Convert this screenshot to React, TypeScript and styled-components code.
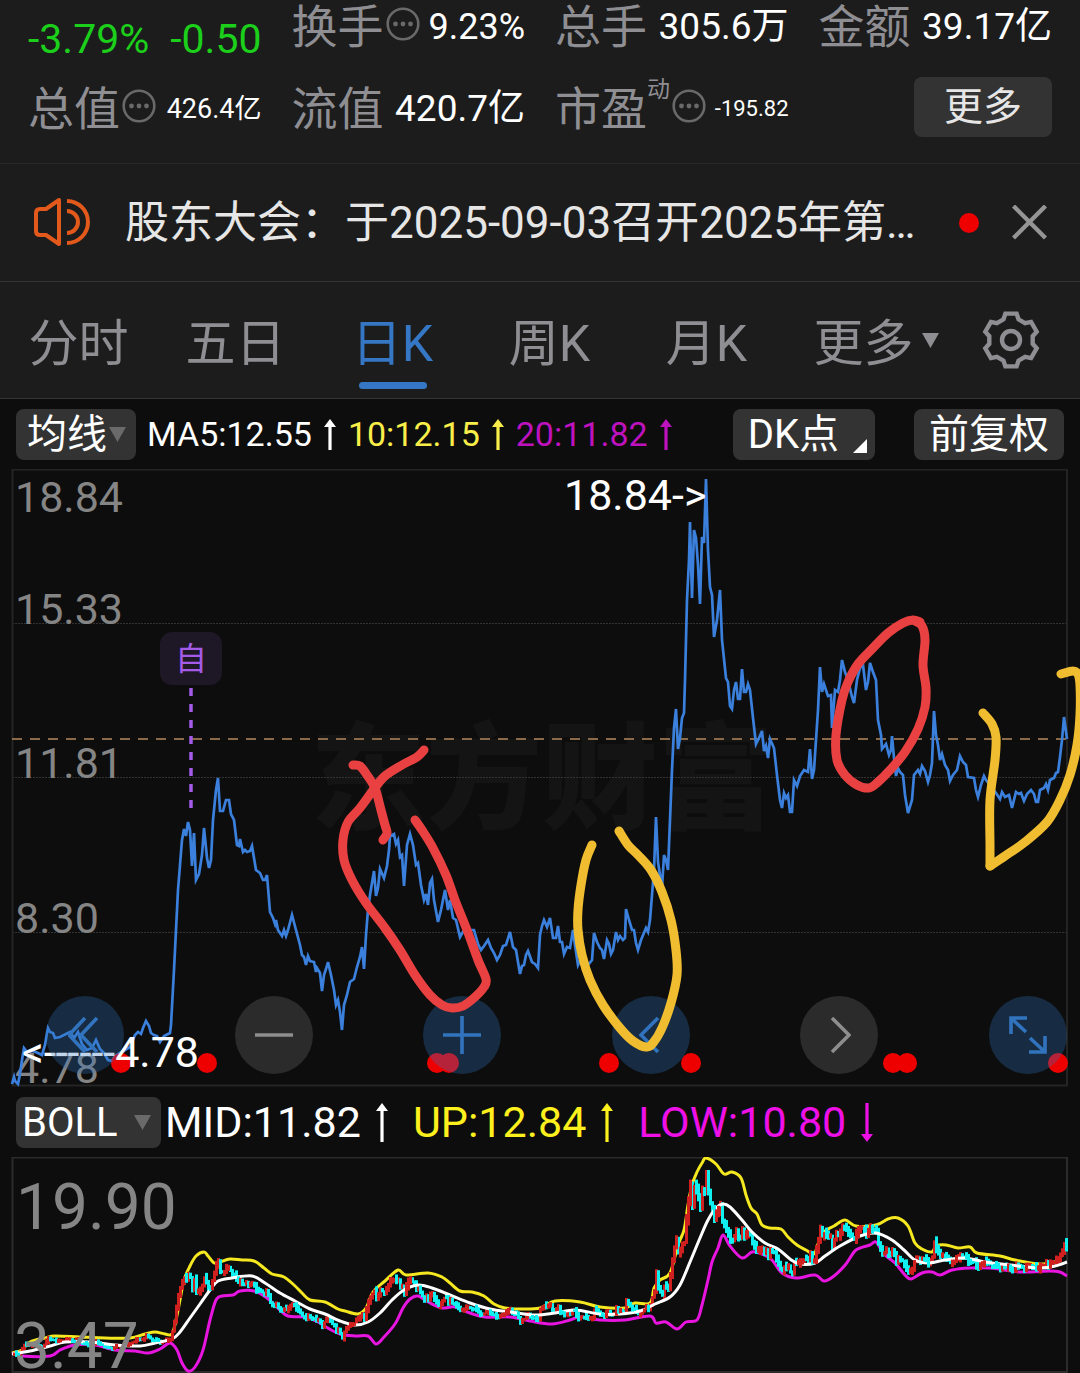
import React from "react";
import styled, { createGlobalStyle } from "styled-components";

const GlobalStyle = createGlobalStyle`
  * { box-sizing: border-box; }
  body {
    margin: 0;
    background: #0d0d0d;
    color: #fff;
    font-family: Roboto, "Noto Sans CJK SC", sans-serif;
  }
  button, select { font-family: inherit; }
  button { border: 0; padding: 0; background: none; cursor: pointer; }
`;

const Page = styled.main`
  overflow-x: hidden;
`;

/* ---------- quote header ---------- */

const Stats = styled.section`
  display: grid;
  grid-template-columns: repeat(4, 1fr);
  grid-template-rows: 50px 60px;
  column-gap: 30px;
  row-gap: 27px;
  padding: 0 28px 26px;
  background: #1c1c1c;
  border-bottom: 1px solid #282828;
`;

const Change = styled.div`
  display: flex;
  justify-content: space-between;
  padding-top: 14px;
  font-size: 41px;
  line-height: 50px;
  color: #1bcf1b;
`;

const Stat = styled.div`
  display: flex;
  align-items: center;
  justify-content: space-between;
  padding-top: 4px;
  white-space: nowrap;
`;

const StatLabel = styled.span`
  display: flex;
  align-items: center;
  gap: 2px;
  font-size: 46px;
  line-height: 50px;
  color: #8e8e93;
`;

const Sup = styled.small`
  align-self: flex-start;
  margin-left: -2px;
  font-size: 23px;
  line-height: 12px;
`;

const StatValue = styled.span<{ $size: number }>`
  font-size: ${(p) => p.$size}px;
  line-height: 50px;
`;

const InfoIcon = styled.svg`
  margin-bottom: 6px;
`;

const MoreButton = styled.button`
  justify-self: end;
  width: 138px;
  border-radius: 8px;
  background: #333;
  color: #e6e6e6;
  font-size: 39px;
  line-height: 60px;
`;

/* ---------- notice ---------- */

const Notice = styled.section`
  display: flex;
  align-items: center;
  height: 118px;
  padding: 0 33px 0 31px;
  background: #1c1c1c;
  border-bottom: 1px solid #333;
`;

const NoticeLink = styled.a`
  flex: 1;
  margin-left: 34px;
  color: #e6e6e6;
  font-size: 44px;
  line-height: 60px;
  text-decoration: none;
  white-space: nowrap;
`;

const Unread = styled.span`
  width: 20px;
  height: 20px;
  margin-right: 33px;
  border-radius: 50%;
  background: #ee0000;
`;

const IconButton = styled.button`
  display: flex;
  align-items: center;
  justify-content: center;
`;

/* ---------- period tabs ---------- */

const TabBar = styled.nav`
  display: flex;
  height: 117px;
  background: #1c1c1c;
  border-bottom: 1px solid #363636;
`;

const TabList = styled.div`
  display: grid;
  grid-template-columns: repeat(6, 1fr);
  flex: 942;
`;

const SettingsButton = styled(IconButton)`
  flex: 138;
`;

const Tab = styled.button<{ $active?: boolean }>`
  position: relative;
  padding-top: 8px;
  color: ${(p) => (p.$active ? "#3577c4" : "#8e8e93")};
  font-size: 50px;
  line-height: 108px;

  &::after {
    content: "";
    display: ${(p) => (p.$active ? "block" : "none")};
    position: absolute;
    left: calc(50% - 34px);
    bottom: 9px;
    width: 68px;
    height: 7px;
    border-radius: 4px;
    background: #3577c4;
  }
`;

const TabCaret = styled.svg`
  position: absolute;
  left: calc(50% + 58px);
  top: 51px;
`;

/* ---------- indicator bars ---------- */

const Bar = styled.div<{ $gap: number }>`
  display: flex;
  align-items: center;
  gap: ${(p) => p.$gap}px;
  height: 70px;
  padding: 0 16px;
`;

const Picker = styled.label<{ $width: number }>`
  position: relative;
  display: block;
  width: ${(p) => p.$width}px;
`;

const PickerSelect = styled.select<{ $indent: number }>`
  appearance: none;
  display: block;
  width: 100%;
  height: 51px;
  padding: 0 0 0 ${(p) => p.$indent}px;
  border: 0;
  border-radius: 8px;
  background: #333;
  color: #fff;
  font-size: 40px;
  line-height: 51px;
`;

const PickerCaret = styled.svg`
  position: absolute;
  right: 10px;
  top: 18px;
  pointer-events: none;
`;

const Readings = styled.div<{ $gap: number }>`
  display: flex;
  gap: ${(p) => p.$gap}px;
`;

const Reading = styled.span<{ $color: string; $size: number; $gap: number }>`
  display: flex;
  align-items: center;
  gap: ${(p) => p.$gap}px;
  color: ${(p) => p.$color};
  font-size: ${(p) => p.$size}px;
  line-height: 50px;
  white-space: nowrap;
`;

const Actions = styled.div`
  display: flex;
  gap: 39px;
  margin-left: auto;
`;

const ToolButton = styled.button`
  display: flex;
  gap: 14px;
  height: 51px;
  padding: 0 15px;
  border-radius: 8px;
  background: #333;
  color: #fff;
  font-size: 40px;
  line-height: 51px;
`;

const Corner = styled.svg`
  align-self: flex-end;
  margin: 0 -7px 7px 0;
`;

/* ---------- charts ---------- */

const Plot = styled.div`
  position: relative;
`;

const Drawing = styled.svg`
  display: block;
  width: 100%;
  height: auto;
  font-family: Roboto, "Noto Sans CJK SC", sans-serif;
`;

const InkLayer = styled(Drawing)`
  position: absolute;
  inset: 0;
  pointer-events: none;
`;

const Controls = styled.div`
  position: absolute;
  left: 0;
  right: 0;
  bottom: 13px;
  display: flex;
  justify-content: space-between;
  padding: 0 13px 0 46px;
`;

const RoundButton = styled(IconButton)<{ $muted?: boolean }>`
  width: 78px;
  height: 78px;
  border-radius: 50%;
  background: ${(p) => (p.$muted ? "#2b2b2b" : "rgba(46, 116, 188, 0.3)")};
  color: ${(p) => (p.$muted ? "#8e8e8e" : "#3273be")};
`;

/* ---------- data ---------- */

type Point = [number, number];

const parse = (s: string): Point[] =>
  s.trim().split(/\s+/).map((p) => p.split(",").map(Number) as Point);

const PRICE = parse(`
12,1084 14,1077 15,1081 18,1084 20,1074 22,1060 24,1048 27,1052 33,1051 38,1053 42,1055 45,1045 47,1033 48,1028
50,1032 53,1033 55,1038 60,1037 66,1034 70,1032 74,1038 78,1032 82,1044 87,1050 92,1048 96,1040 100,1049 104,1053 108,1060
112,1061 115,1056 120,1053 125,1050 130,1047 135,1035 138,1032 141,1034 143,1028 146,1021 149,1026 151,1033 154,1035
157,1036 160,1042 164,1036 170,1033 171,1025 174,970 176,930 178,890 180,865 182,840 184,829 186,836 188,822 190,830
192,866 194,833 196,880 199,874 202,855 204,828 207,858 209,868 211,860 213,820 216,790 218,778 220,811 223,811
226,800 229,800 231,814 234,820 237,845 239,846 240,839 243,852 245,850 247,852 250,851 252,846 256,870 260,873
263,880 265,880 267,875 270,912 273,918 275,924 276,920 278,930 282,936 284,930 286,936 288,930 292,915 296,930
300,945 302,955 304,957 306,965 308,956 310,961 314,962 316,972 317,968 320,973 322,991 324,975 326,969 328,962
331,975 334,990 336,1005 338,1000 340,1012 342,1030 344,1005 347,995 350,982 354,979 357,967 360,957 362,947 364,969
366,935 368,910 370,895 374,871 376,896 378,888 380,869 384,878 387,866 389,850 390,836 394,834 396,844 398,840
400,857 402,855 404,886 407,845 410,834 413,845 416,865 418,863 421,885 424,900 426,894 428,905 430,883 432,879
434,900 438,922 441,910 445,890 448,910 450,900 453,918 456,920 460,937 464,930 474,930 478,944 481,950 484,946
488,940 491,948 494,953 497,960 500,955 503,946 506,945 510,932 513,947 516,950 520,974 522,966 524,965 526,955
528,951 532,962 535,964 538,968 540,935 542,926 544,920 547,927 550,918 553,938 556,938 558,926 560,942 562,942
564,954 567,947 570,948 573,930 575,945 578,965 583,955 588,965 592,960 594,933 597,942 600,948 602,950 604,959
607,940 609,944 611,954 613,950 616,932 618,940 620,936 623,940 625,938 626,909 629,920 632,930 634,930 636,943
638,950 641,940 646,928 648,932 650,920 652,895 654,870 656,817 658,862 662,888 664,855 666,860 668,870 670,820
672,770 674,728 676,709 678,749 680,738 682,718 684,713 685,680 687,600 689,560 690,522 692,598 694,530 696,538
698,565 700,604 702,537 704,543 706,479 708,550 710,587 712,595 714,637 717,620 720,590 722,640 726,678 728,682
730,706 732,709 734,690 736,682 738,699 740,699 742,669 744,692 746,692 748,684 750,690 753,718 756,744 759,738
762,731 764,751 766,746 768,758 770,739 774,748 777,775 780,800 782,808 784,793 786,798 788,795 790,812 792,812
794,780 797,786 800,776 804,770 808,772 810,749 812,779 814,770 816,740 818,710 820,667 822,692 824,684 828,696
831,695 832,728 835,690 838,692 840,680 842,660 845,672 848,680 852,697 854,703 857,680 860,668 863,665 866,690
868,682 870,663 873,672 876,680 878,720 881,735 882,749 886,744 889,755 891,750 892,736 894,758 896,776 898,768
900,772 903,775 905,795 908,813 912,800 914,775 918,770 920,774 922,766 925,771 928,782 930,775 932,763 934,711
936,735 938,745 940,760 942,754 945,765 948,770 950,781 953,775 957,770 960,756 963,762 966,765 968,777 974,778
976,790 978,797 981,785 984,776 986,780 990,785 996,793 1000,799 1002,792 1005,797 1009,795 1012,808 1016,792
1019,794 1021,793 1024,801 1027,794 1031,790 1034,794 1036,802 1038,802 1040,790 1044,788 1046,784 1048,790
1050,780 1054,778 1056,773 1058,772 1060,757 1062,740 1064,717 1067,739`);

const UPPER = parse(`
12,1353 22,1350 30,1342 45,1338 55,1336 80,1337 105,1338 130,1338 145,1334 155,1332 165,1334 172,1334 176,1320
180,1300 184,1280 190,1266 196,1256 204,1252 208,1256 214,1263 220,1262 230,1259 242,1260 254,1261 264,1268 272,1274
284,1277 294,1285 302,1293 310,1300 325,1302 338,1309 345,1311 358,1314 366,1308 373,1292 385,1281 398,1270 406,1275
428,1273 442,1277 450,1283 460,1291 472,1292 484,1296 494,1304 505,1308 520,1309 540,1308 555,1301 580,1302 600,1307
625,1308 635,1303 650,1303 654,1288 660,1280 670,1273 678,1245 684,1230 688,1205 692,1185 697,1172 702,1163 706,1158
716,1164 724,1174 732,1172 741,1178 746,1195 751,1208 757,1214 762,1225 770,1228 781,1229 788,1237 797,1245 806,1250
814,1254 818,1244 824,1232 834,1226 845,1220 856,1226 876,1225 888,1219 898,1218 908,1226 915,1243 922,1249 932,1252
936,1246 946,1245 958,1248 970,1247 977,1253 1000,1256 1015,1260 1040,1264 1055,1262 1062,1255 1067,1246`);

const MIDDLE = parse(`
12,1354 30,1351 50,1346 65,1342 90,1342 115,1345 140,1346 155,1343 172,1339 180,1332 190,1318 200,1304 210,1290
218,1281 232,1278 252,1276 265,1283 280,1293 295,1301 310,1309 325,1314 340,1321 355,1325 368,1322 380,1313 392,1300
404,1290 418,1285 432,1288 450,1295 470,1303 490,1309 510,1312 535,1315 555,1313 575,1310 600,1314 620,1314 640,1311
655,1304 670,1297 680,1285 690,1262 700,1238 708,1220 716,1208 723,1204 730,1207 742,1220 752,1232 765,1243 778,1249
790,1259 800,1264 815,1263 825,1256 840,1246 860,1236 876,1233 892,1240 904,1250 915,1260 928,1263 945,1260 965,1258
985,1262 1010,1265 1040,1268 1055,1266 1067,1262`);

const LOWER = parse(`
12,1353 22,1356 50,1356 60,1350 75,1345 95,1345 115,1350 135,1351 148,1353 160,1349 170,1343 177,1350 182,1363
188,1371 195,1367 203,1350 210,1320 216,1300 222,1296 233,1295 240,1291 254,1291 267,1298 278,1308 288,1316 305,1317
318,1322 326,1327 340,1334 355,1336 368,1336 376,1344 384,1337 395,1324 403,1308 410,1299 418,1296 430,1303 442,1308
455,1307 470,1313 485,1317 510,1317 530,1321 552,1324 570,1320 580,1317 600,1320 625,1320 650,1316 656,1323 666,1322
677,1329 686,1322 697,1320 702,1305 708,1280 712,1262 718,1248 723,1235 730,1246 742,1258 752,1252 762,1254 772,1260
782,1273 796,1278 815,1275 824,1281 834,1276 846,1264 856,1250 870,1245 876,1242 884,1254 895,1263 905,1275 911,1279
922,1273 932,1272 940,1275 952,1270 970,1268 990,1268 1020,1272 1050,1271 1060,1272 1067,1276`);

const EVENTS = [121, 207, 437, 449, 609, 691, 893, 907, 1058];

const line = (pts: Point[]) => "M" + pts.map((p) => p.join(" ")).join("L");

/* Catmull-Rom smoothing for the bands and hand-drawn strokes */
const smooth = (pts: Point[]) => {
  let d = `M${pts[0]}`;
  for (let i = 0; i < pts.length - 1; i++) {
    const a = pts[Math.max(i - 1, 0)];
    const b = pts[i];
    const c = pts[i + 1];
    const e = pts[Math.min(i + 2, pts.length - 1)];
    d += `C${b[0] + (c[0] - a[0]) / 6} ${b[1] + (c[1] - a[1]) / 6} ${c[0] - (e[0] - b[0]) / 6} ${c[1] - (e[1] - b[1]) / 6} ${c[0]} ${c[1]}`;
  }
  return d;
};

const RED_INK = [
  "424,750 417,757 402,765 385,776 374,789 360,808 348,822 343,840 344,860 352,880 366,903 385,928 400,950 415,975 430,995 442,1005 452,1008 463,1006 475,997 484,987 486,979 478,960 467,930 455,900 446,875 433,848 422,830 415,820",
  "353,765 360,766 367,775 375,788 381,810 385,825 387,833 383,840",
  "920,622 913,620 903,623 888,633 872,649 858,664 848,682 842,700 836,735 837,760 845,775 857,785 869,788 878,782 890,770 905,752 918,729 925,707 926,688 923,665 925,640 922,626 913,620",
].map((s) => smooth(parse(s)));

const YELLOW_INK = [
  "592,845 586,860 581,885 578,910 578,930 582,955 590,980 603,1005 620,1028 633,1041 646,1047 653,1043 662,1028 671,1003 677,975 676,950 671,920 662,892 651,870 638,855 628,845 619,831",
  "983,713 992,724 996,737 995,760 990,800 990,845 990,866",
  "990,866 1005,856 1025,842 1047,822 1060,800 1070,775 1077,745 1080,715 1080,685 1078,674 1073,671 1061,674",
].map((s) => smooth(parse(s)));

const priceAt = (x: number) => {
  const i = Math.max(1, PRICE.findIndex((p) => p[0] >= x));
  const [x0, y0] = PRICE[i - 1];
  const [x1, y1] = PRICE[i];
  return 1171 + (y0 + ((y1 - y0) * (x - x0)) / (x1 - x0) - 479) * 0.3047;
};

/* wicks grow with the price level */
const CANDLES = Array.from({ length: 527 }, (_, i) => {
  const x = 14 + i * 2;
  const open = priceAt(x - 2);
  const close = priceAt(x);
  const flicker = (i * 7919) % 5;
  const scale = 1 + Math.max(0, 1355 - close) / 100;
  const top = Math.max(1170, Math.min(open, close) - (0.6 + flicker * 0.5) * scale);
  const bottom = Math.max(open, close) + (0.6 + ((i * 31) % 4) * 0.5) * scale;
  return { x, top, height: bottom - top, up: close === open ? flicker > 2 : close < open };
});

/* ---------- small drawings ---------- */

const Dots = () => (
  <InfoIcon width="34" height="34" viewBox="0 0 34 34" aria-hidden="true">
    <circle cx="17" cy="17" r="15.300" fill="none" stroke="#69696b" strokeWidth="2.600" />
    <g fill="#69696b">
      <circle cx="9.500" cy="17" r="2.400" />
      <circle cx="17" cy="17" r="2.400" />
      <circle cx="24.500" cy="17" r="2.400" />
    </g>
  </InfoIcon>
);

const Arrow = ({ down, height }: { down?: boolean; height: number }) => (
  <svg width="12" height={height} viewBox={`0 0 12 ${height}`} aria-hidden="true">
    <g fill="currentColor" transform={down ? `rotate(180 6 ${height / 2})` : undefined}>
      <path d="M6 0L12 8H0Z" />
      <rect x="4.400" y="5" width="3.200" height={height - 5} />
    </g>
  </svg>
);

const Caret = () => (
  <PickerCaret width="17" height="15" viewBox="0 0 17 15" aria-hidden="true">
    <path d="M0 0H17L8.500 15Z" fill="#6a6a6a" />
  </PickerCaret>
);

const GEAR = (() => {
  const tooth: Point[] = [[-20, 22], [-12, 27], [12, 27], [20, 22]];
  const pts: string[] = [];
  for (let k = 0; k < 6; k++) {
    tooth.forEach(([angle, r]) => {
      const t = ((k * 60 - 90 + angle) * Math.PI) / 180;
      pts.push(`${(30 + r * Math.cos(t)).toFixed(1)} ${(30 + r * Math.sin(t)).toFixed(1)}`);
    });
  }
  return `M${pts.join("L")}Z`;
})();

const PriceChart = () => (
  <Drawing viewBox="0 469 1080 618" role="img" aria-label="日K">
    <text x="310" y="820" fontSize="116" fontWeight="900" fill="#141414">东方财富</text>
    <g stroke="#333" strokeWidth="1" strokeDasharray="2 1">
      <path d="M12 623.500H1067M12 777.500H1067M12 932.500H1067" />
    </g>
    <path d="M12.500 469.500H1067V1085.500H12.500Z" fill="none" stroke="#242424" strokeWidth="2" />
    <path d="M12 739H1067" stroke="#8a6a48" strokeWidth="2" strokeDasharray="10 8" />
    <g fill="#858585" fontSize="43">
      <text x="15" y="512">18.84</text>
      <text x="15" y="624">15.33</text>
      <text x="15" y="778">11.81</text>
      <text x="15" y="933">8.30</text>
      <text x="15" y="1083">4.78</text>
    </g>
    <path d={line(PRICE)} fill="none" stroke="#3a80dc" strokeWidth="2.700" strokeLinejoin="miter" />
    <rect x="160" y="632" width="62" height="53" rx="12" fill="#1e1726" />
    <text x="175" y="670" fontSize="32" fill="#a35be8">自</text>
    <path d="M191 688V808" stroke="#a35be8" strokeWidth="3.500" strokeDasharray="8 8" />
    <g fill="#ee0000">
      {EVENTS.map((x) => (
        <circle key={x} cx={x} cy="1063" r="10" />
      ))}
    </g>
    <g fill="#fff" fontSize="43">
      <text x="564" y="510">18.84-&gt;</text>
      <text x="22" y="1067">&lt;------4.78</text>
    </g>
  </Drawing>
);

const candleFill = (up: boolean) => (up ? "#d02020" : "#10f0f0");

const BollChart = () => (
  <Drawing viewBox="0 1157 1080 216" role="img" aria-label="BOLL">
    <path d="M12.500 1157.500H1067V1372H12.500Z" fill="none" stroke="#2b2b2b" strokeWidth="2" />
    <g fill="none" strokeWidth="3" strokeLinejoin="round">
      <path d={smooth(UPPER)} stroke="#f5e820" />
      <path d={smooth(LOWER)} stroke="#e815e0" />
    </g>
    {CANDLES.map((c) => (
      <rect key={c.x} x={c.x - 1} y={c.top} width="3" height={c.height} fill={candleFill(c.up)} />
    ))}
    <path d={smooth(MIDDLE)} fill="none" stroke="#fff" strokeWidth="3" />
    {CANDLES.filter((c) => c.x % 14 < 5).map((c) => (
      <rect key={c.x} x={c.x - 1} y={c.top} width="3" height={c.height} fill={candleFill(c.up)} />
    ))}
    <g fill="#858585" fontSize="64">
      <text x="16" y="1229">19.90</text>
      <text x="14" y="1368">3.47</text>
    </g>
  </Drawing>
);

const glyph = { fill: "none", stroke: "currentColor", strokeWidth: 3.6 };

export default function App() {
  return (
    <Page>
      <GlobalStyle />

      <Stats>
        <Change>
          <span>-3.79%</span>
          <span>-0.50</span>
        </Change>
        <Stat>
          <StatLabel>换手<Dots /></StatLabel>
          <StatValue $size={36}>9.23%</StatValue>
        </Stat>
        <Stat>
          <StatLabel>总手</StatLabel>
          <StatValue $size={37}>305.6万</StatValue>
        </Stat>
        <Stat>
          <StatLabel>金额</StatLabel>
          <StatValue $size={37}>39.17亿</StatValue>
        </Stat>
        <Stat>
          <StatLabel>总值<Dots /></StatLabel>
          <StatValue $size={27}>426.4亿</StatValue>
        </Stat>
        <Stat>
          <StatLabel>流值</StatLabel>
          <StatValue $size={37}>420.7亿</StatValue>
        </Stat>
        <Stat>
          <StatLabel>市盈<Sup>动</Sup><Dots /></StatLabel>
          <StatValue $size={22}>-195.82</StatValue>
        </Stat>
        <MoreButton>更多</MoreButton>
      </Stats>

      <Notice>
        <svg width="60" height="52" viewBox="0 0 60 52" fill="none" stroke="#e2591b" strokeWidth="4" aria-hidden="true">
          <path d="M28 3V47L15 38H9Q5 38 5 34V16Q5 12 9 12H15Z" strokeLinejoin="round" />
          <path d="M36 14A11 11 0 0 1 36 36M36 4A21 21 0 0 1 36 46" />
        </svg>
        <NoticeLink href="#notice">股东大会：于2025-09-03召开2025年第…</NoticeLink>
        <Unread />
        <IconButton aria-label="关闭">
          <svg width="35" height="36" viewBox="0 0 35 36" stroke="#959595" strokeWidth="4.400" aria-hidden="true">
            <path d="M1.500 1L33.500 33M33.500 1L1.500 33" />
          </svg>
        </IconButton>
      </Notice>

      <TabBar>
        <TabList role="tablist">
          <Tab role="tab">分时</Tab>
          <Tab role="tab">五日</Tab>
          <Tab role="tab" aria-selected="true" $active>日K</Tab>
          <Tab role="tab">周K</Tab>
          <Tab role="tab">月K</Tab>
          <Tab role="tab">
            更多
            <TabCaret width="17" height="15" viewBox="0 0 17 15" aria-hidden="true">
              <path d="M0 0H17L8.500 15Z" fill="#8e8e93" />
            </TabCaret>
          </Tab>
        </TabList>
        <SettingsButton aria-label="设置">
          <svg width="60" height="60" viewBox="0 0 60 60" fill="none" stroke="#8e8e93" strokeWidth="4.400" aria-hidden="true">
            <path d={GEAR} />
            <circle cx="30" cy="30" r="9" />
          </svg>
        </SettingsButton>
      </TabBar>

      <Bar $gap={11}>
        <Picker $width={120}>
          <PickerSelect $indent={11} aria-label="主图指标">
            <option>均线</option>
          </PickerSelect>
          <Caret />
        </Picker>
        <Readings $gap={12}>
          <Reading $color="#fff" $size={34} $gap={12}>MA5:12.55<Arrow height={31} /></Reading>
          <Reading $color="#f9ee49" $size={34} $gap={12}>10:12.15<Arrow height={31} /></Reading>
          <Reading $color="#bf12bf" $size={34} $gap={12}>20:11.82<Arrow height={31} /></Reading>
        </Readings>
        <Actions>
          <ToolButton aria-haspopup="menu">
            DK点
            <Corner width="14" height="14" viewBox="0 0 14 14" aria-hidden="true">
              <path d="M14 0V14H0Z" fill="#fff" />
            </Corner>
          </ToolButton>
          <ToolButton>前复权</ToolButton>
        </Actions>
      </Bar>

      <Plot>
        <PriceChart />
        <Controls>
          <RoundButton aria-label="最早">
            <svg width="34" height="38" viewBox="0 0 34 38" {...glyph} aria-hidden="true">
              <path d="M17 2L1 19L17 36M29 2L13 19L29 36" />
            </svg>
          </RoundButton>
          <RoundButton $muted aria-label="缩小">
            <svg width="38" height="38" viewBox="0 0 38 38" {...glyph} aria-hidden="true">
              <path d="M0 19H38" />
            </svg>
          </RoundButton>
          <RoundButton aria-label="放大">
            <svg width="38" height="38" viewBox="0 0 38 38" {...glyph} aria-hidden="true">
              <path d="M0 19H38M19 0V38" />
            </svg>
          </RoundButton>
          <RoundButton aria-label="向左">
            <svg width="24" height="38" viewBox="0 0 24 38" {...glyph} aria-hidden="true">
              <path d="M19 2L2 19L19 36" />
            </svg>
          </RoundButton>
          <RoundButton $muted aria-label="向右">
            <svg width="24" height="38" viewBox="0 0 24 38" {...glyph} aria-hidden="true">
              <path d="M5 2L22 19L5 36" />
            </svg>
          </RoundButton>
          <RoundButton aria-label="全屏">
            <svg width="38" height="38" viewBox="0 0 38 38" {...glyph} aria-hidden="true">
              <path d="M18 2H2V18M2 2L17 16M36 20V36H20M36 36L21 22" />
            </svg>
          </RoundButton>
        </Controls>
        <InkLayer viewBox="0 469 1080 618" aria-hidden="true">
          <g fill="none" strokeWidth="9" strokeLinecap="round" strokeLinejoin="round">
            {RED_INK.map((d) => (
              <path key={d} d={d} stroke="#e94141" />
            ))}
            {YELLOW_INK.map((d) => (
              <path key={d} d={d} stroke="#f1bd30" />
            ))}
          </g>
        </InkLayer>
      </Plot>

      <Bar $gap={4}>
        <Picker $width={145}>
          <PickerSelect $indent={6} aria-label="副图指标">
            <option>BOLL</option>
          </PickerSelect>
          <Caret />
        </Picker>
        <Readings $gap={25}>
          <Reading $color="#fff" $size={43} $gap={15}>MID:11.82<Arrow height={39} /></Reading>
          <Reading $color="#fdf01d" $size={43} $gap={15}>UP:12.84<Arrow height={39} /></Reading>
          <Reading $color="#ee10e6" $size={43} $gap={15}>LOW:10.80<Arrow height={39} down /></Reading>
        </Readings>
      </Bar>

      <BollChart />
    </Page>
  );
}
